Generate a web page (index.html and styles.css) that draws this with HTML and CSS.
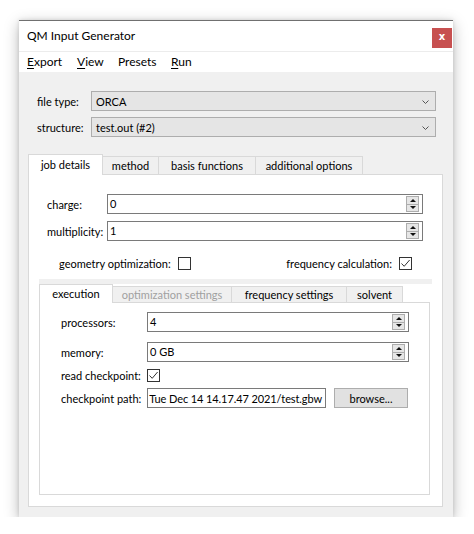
FILE: index.html
```html
<!DOCTYPE html>
<html>
<head>
<meta charset="utf-8">
<title>QM Input Generator</title>
<link rel="stylesheet" href="styles.css">
</head>
<body>
<div class="window">
  <div class="titlebar">
    <span class="title">QM Input Generator</span>
    <div class="close">x</div>
  </div>
  <div class="menubar">
    <span class="menu m-export"><u>E</u>xport</span>
    <span class="menu m-view"><u>V</u>iew</span>
    <span class="menu m-presets">Presets</span>
    <span class="menu m-run"><u>R</u>un</span>
  </div>
  <div class="content">
    <div class="form top-form">
      <span class="lbl">file type:</span>
      <div class="combo"><span>ORCA</span><svg class="chev" width="7" height="4" viewBox="0 0 7 4"><path d="M0.5 0.5 L3.5 3.5 L6.5 0.5" fill="none" stroke="#555" stroke-width="1"/></svg></div>
      <span class="lbl">structure:</span>
      <div class="combo"><span>test.out (#2)</span><svg class="chev" width="7" height="4" viewBox="0 0 7 4"><path d="M0.5 0.5 L3.5 3.5 L6.5 0.5" fill="none" stroke="#555" stroke-width="1"/></svg></div>
    </div>

    <div class="tabwidget main-tabs">
      <div class="tabbar">
        <div class="tab sel t-job">job details</div>
        <div class="tab t-method">method</div>
        <div class="tab t-basis">basis functions</div>
        <div class="tab t-add">additional options</div>
      </div>
      <div class="pane main-pane">
        <div class="form job-form">
          <span class="lbl">charge:</span>
          <div class="spin"><span class="val">0</span><div class="spinbtns"><div class="sb up"><i></i></div><div class="sb down"><i></i></div></div></div>
          <span class="lbl">multiplicity:</span>
          <div class="spin"><span class="val">1</span><div class="spinbtns"><div class="sb up"><i></i></div><div class="sb down"><i></i></div></div></div>
        </div>
        <div class="checks">
          <div class="check-item">geometry optimization:<span class="cb"></span></div>
          <div class="check-item">frequency calculation:<span class="cb"><svg width="11" height="11" viewBox="0 0 11 11"><path d="M1.5 5.5 L4.2 8.3 L9.6 2" fill="none" stroke="#333" stroke-width="1"/></svg></span></div>
        </div>
        <div class="strip"></div>
        <div class="tabwidget inner-tabs">
          <div class="tabbar">
            <div class="tab sel t-exec">execution</div>
            <div class="tab disabled t-opt">optimization settings</div>
            <div class="tab t-freq">frequency settings</div>
            <div class="tab t-solv">solvent</div>
          </div>
          <div class="pane inner-pane">
            <div class="row r-proc">
              <span class="lbl">processors:</span>
              <div class="spin"><span class="val">4</span><div class="spinbtns"><div class="sb up"><i></i></div><div class="sb down"><i></i></div></div></div>
            </div>
            <div class="row r-mem">
              <span class="lbl">memory:</span>
              <div class="spin"><span class="val">0 GB</span><div class="spinbtns"><div class="sb up"><i></i></div><div class="sb down"><i></i></div></div></div>
            </div>
            <div class="row r-read">
              <span class="lbl">read checkpoint:</span>
              <span class="cb"><svg width="11" height="11" viewBox="0 0 11 11"><path d="M1.5 5.5 L4.2 8.3 L9.6 2" fill="none" stroke="#333" stroke-width="1"/></svg></span>
            </div>
            <div class="row r-path">
              <span class="lbl">checkpoint path:</span>
              <div class="lineedit"><span>Tue Dec 14 14.17.47 2021/test.gbw</span></div>
              <div class="button">browse...</div>
            </div>
          </div>
        </div>
      </div>
    </div>
  </div>
</div>
</body>
</html>
```

FILE: styles.css
```css
* { box-sizing: border-box; }

html, body {
  margin: 0;
  padding: 0;
  background: #ffffff;
}

body {
  font-family: "Lato", "Noto Sans", sans-serif;
  font-size: 11px;
  color: #000;
}

.window {
  margin: 20px 0 0 19px;
  width: 434px;
  height: 497px;
  background: #f0f0f0;
  border-top: 1px solid #707070;
  box-shadow: 0 4px 14px rgba(0, 0, 0, 0.28), 0 0 4px rgba(0, 0, 0, 0.12);
  display: flex;
  flex-direction: column;
}

.titlebar {
  height: 30px;
  background: #fff;
  display: flex;
  justify-content: space-between;
  align-items: flex-start;
  padding-left: 8px;
}

.title {
  line-height: 30px;
  font-size: 12px;
  color: #000;
}

.close {
  width: 20px;
  height: 20px;
  margin-top: 7px;
  margin-right: 1px;
  background: #c75050;
  color: #fff;
  font-family: "DejaVu Sans", sans-serif;
  font-weight: bold;
  font-size: 10px;
  line-height: 18px;
  text-align: center;
}

.menubar {
  height: 21px;
  background: #fff;
  border-top: 1px solid #ececec;
  display: flex;
  align-items: center;
  padding-left: 8px;
  font-size: 12px;
}

.menu { line-height: 20px; }
.menu u { text-decoration-thickness: 1px; text-underline-offset: 2px; }
.m-export { width: 50px; }
.m-view { width: 41px; }
.m-presets { width: 53px; }

.content {
  flex: 1;
  display: flex;
  flex-direction: column;
  padding: 19px 10px 10px 9px;
}

.form {
  display: grid;
  align-items: center;
}

.lbl { white-space: nowrap; }

.top-form {
  grid-template-columns: 54px 345px;
  row-gap: 6px;
  padding-left: 9px;
}

.combo {
  height: 20px;
  background: #e5e5e5;
  border: 1px solid #adadad;
  display: flex;
  align-items: center;
  justify-content: space-between;
  padding: 0 6px 0 4px;
}

.chev { display: block; margin-top: 1px; }

.main-tabs {
  margin-top: 17px;
  flex: 1;
  display: flex;
  flex-direction: column;
}

.tabbar {
  display: flex;
  align-items: flex-end;
  position: relative;
  z-index: 1;
}

.tab {
  background: #f0f0f0;
  border: 1px solid #d9d9d9;
  border-bottom: none;
  margin-left: -1px;
  text-align: center;
  white-space: nowrap;
}

.tab:first-child { margin-left: 0; }

.tab.sel {
  background: #fff;
  margin-bottom: -1px;
}

.tab.disabled { color: #a0a0a0; }

.main-tabs > .tabbar { height: 20px; }
.main-tabs > .tabbar .tab { height: 18px; line-height: 17px; }
.main-tabs > .tabbar .tab.sel { height: 21px; line-height: 20px; }

.t-job { width: 75px; }
.t-method { width: 57px; }
.t-basis { width: 98px; }
.t-add { width: 108px; }

.pane {
  background: #fff;
  border: 1px solid #d9d9d9;
}

.main-pane {
  flex: 1;
  padding: 19px 0 11px 10px;
  display: flex;
  flex-direction: column;
}

.job-form {
  grid-template-columns: 60px 316px;
  row-gap: 7px;
  padding-left: 8px;
}

.spin {
  height: 20px;
  background: #fff;
  border: 1px solid #7a7a7a;
  display: flex;
  align-items: center;
  justify-content: space-between;
  padding: 0 3px 0 2px;
}

.val { line-height: 18px; }

.spinbtns {
  width: 13px;
  height: 16px;
  border: 1px solid #adadad;
  background: #e6e6e6;
  display: flex;
  flex-direction: column;
}

.sb {
  flex: 1;
  display: flex;
  align-items: center;
  justify-content: center;
}

.sb.up { border-bottom: 1px solid #adadad; }

.sb i {
  display: block;
  width: 0;
  height: 0;
  border-left: 3px solid transparent;
  border-right: 3px solid transparent;
}

.sb.up i { border-bottom: 3px solid #111; }
.sb.down i { border-top: 3px solid #111; }

.checks {
  margin: 16px 30px 0 20px;
  height: 13px;
  display: flex;
  justify-content: space-between;
  align-items: center;
}

.check-item {
  display: flex;
  align-items: center;
  gap: 7px;
  white-space: nowrap;
}

.cb {
  width: 13px;
  height: 13px;
  flex: none;
  border: 1px solid #333;
  background: #fff;
  display: flex;
  align-items: center;
  justify-content: center;
}

.cb svg { display: block; }

.strip {
  margin-top: 9px;
  width: 393px;
  height: 5px;
  background: #f0f0f0;
}

.inner-tabs {
  width: 391px;
  display: flex;
  flex-direction: column;
}

.inner-tabs > .tabbar { height: 18px; }
.inner-tabs > .tabbar .tab { height: 16px; line-height: 15px; }
.inner-tabs > .tabbar .tab.sel { height: 19px; line-height: 18px; }

.t-exec { width: 74px; }
.t-opt { width: 120px; }
.t-freq { width: 116px; }
.t-solv { width: 57px; }

.inner-pane {
  height: 193px;
  padding: 9px 0 0 21px;
  display: flex;
  flex-direction: column;
}

.row {
  display: flex;
  align-items: center;
}

.row .lbl { width: 86px; flex: none; }
.row .spin { width: 262px; }

.r-proc, .r-mem, .r-path { height: 20px; }
.r-mem { margin-top: 10px; }
.r-read { height: 13px; margin-top: 7px; }
.r-path { margin-top: 6px; }

.lineedit {
  width: 179px;
  height: 20px;
  border: 1px solid #7a7a7a;
  background: #fff;
  display: flex;
  justify-content: flex-end;
  align-items: center;
  overflow: hidden;
  white-space: nowrap;
  padding: 0 3px 0 1px;
  letter-spacing: -0.1px;
}

.button {
  width: 74px;
  height: 20px;
  margin-left: 8px;
  background: #e1e1e1;
  border: 1px solid #adadad;
  display: flex;
  align-items: center;
  justify-content: center;
}
```
